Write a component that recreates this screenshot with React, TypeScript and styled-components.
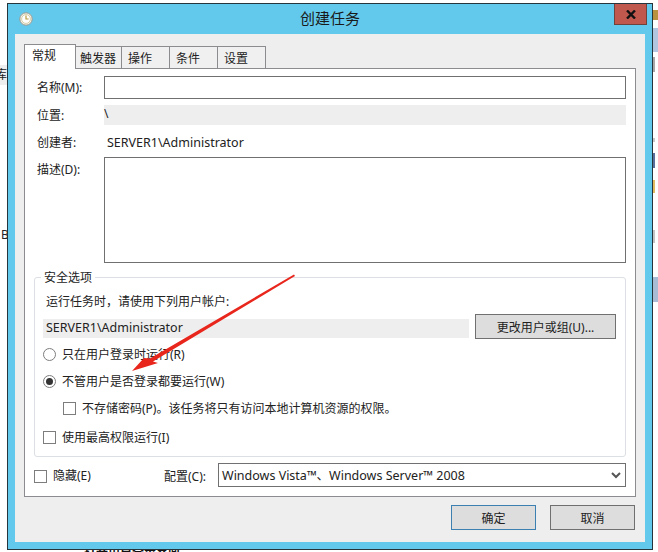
import React from "react";
import styled, { createGlobalStyle } from "styled-components";

const GlobalStyle = createGlobalStyle`
  html, body {
    margin: 0;
    padding: 0;
    background: #fff;
  }
  * {
    box-sizing: border-box;
  }
`;

const App: React.FC = () => {
  return (
    <Page>
      <GlobalStyle />
      <LeftScrap $top={65}>库</LeftScrap>
      <LeftLetter>B</LeftLetter>
      <RightStrip $top={10} $height={10} $width={5} $color="#b9923f" />
      <RightStrip $top={28} $height={24} $width={5} $color="#b3c6e0" />
      <RightStrip $top={57} $height={15} $width={2} $color="#a8a8a8" />
      <RightStrip $top={138} $height={4} $width={2} $color="#c9c9c9" />
      <RightStrip $top={153} $height={15} $width={2} $color="#5a6e9c" />
      <RightStrip $top={180} $height={13} $width={2} $color="#e0bb62" />
      <RightStrip $top={230} $height={13} $width={2} $color="#c4c4c4" />
      <RightStrip $top={277} $height={25} $width={5} $color="#a9bcd6" />
      <BottomScrap>打开用户登录界面</BottomScrap>

      <Window>
        <TitleBar>
          <ClockIcon viewBox="0 0 14 14">
            <circle cx="7" cy="7" r="6.2" fill="#f4f1e6" stroke="#9a9a90" />
            <circle cx="7" cy="7" r="4.4" fill="#fff" stroke="#d8cfa8" />
            <path d="M7 3.6V7H9.6" fill="none" stroke="#b99a3a" strokeWidth="1.2" />
          </ClockIcon>
          <Title>创建任务</Title>
          <CloseButton type="button" aria-label="关闭">
            <svg width="10" height="9" viewBox="0 0 10 9">
              <path d="M1 0.5L9 8.5M9 0.5L1 8.5" stroke="#111" strokeWidth="2.4" />
            </svg>
          </CloseButton>
        </TitleBar>

        <Client>
          <TabStrip>
            <Tab $active $width={52} $pad={7}>
              常规
            </Tab>
            <Tab $width={46} $pad={4}>
              触发器
            </Tab>
            <Tab $width={48} $pad={6}>
              操作
            </Tab>
            <Tab $width={48} $pad={6}>
              条件
            </Tab>
            <Tab $width={48} $pad={6}>
              设置
            </Tab>
          </TabStrip>

          <Pane>
            <FormRow $top={7}>
              <FieldLabel $drop={4}>名称(M):</FieldLabel>
              <TextInput $height={23} />
            </FormRow>
            <FormRow $top={6}>
              <FieldLabel $drop={3}>位置:</FieldLabel>
              <ReadOnlyField $height={20}>\</ReadOnlyField>
            </FormRow>
            <FormRow $top={7}>
              <FieldLabel $drop={3}>创建者:</FieldLabel>
              <PlainValue>SERVER1\Administrator</PlainValue>
            </FormRow>
            <FormRow $top={4}>
              <FieldLabel $drop={5}>描述(D):</FieldLabel>
              <TextInput $height={106} />
            </FormRow>

            <SecurityGroup>
              <Legend>安全选项</Legend>
              <Caption>运行任务时，请使用下列用户帐户:</Caption>
              <AccountRow>
                <AccountField>SERVER1\Administrator</AccountField>
                <DialogButton type="button" $width={141}>
                  更改用户或组(U)...
                </DialogButton>
              </AccountRow>
              <OptionRow $top={8}>
                <Radio />
                只在用户登录时运行(R)
              </OptionRow>
              <OptionRow $top={11}>
                <Radio $checked />
                不管用户是否登录都要运行(W)
              </OptionRow>
              <OptionRow $top={11} $indent={20}>
                <CheckBox />
                不存储密码(P)。该任务将只有访问本地计算机资源的权限。
              </OptionRow>
              <OptionRow $top={13}>
                <CheckBox />
                使用最高权限运行(I)
              </OptionRow>
            </SecurityGroup>

            <FooterRow>
              <HiddenOption>
                <CheckBox />
                隐藏(E)
              </HiddenOption>
              <ConfigLabel>配置(C):</ConfigLabel>
              <SelectBox>
                Windows Vista™、Windows Server™ 2008
                <svg width="10" height="7" viewBox="0 0 10 7">
                  <path d="M1 1L5 5L9 1" fill="none" stroke="#555" strokeWidth="2" />
                </svg>
              </SelectBox>
            </FooterRow>
          </Pane>

          <ButtonBar>
            <DialogButton type="button" $width={85} $primary>
              确定
            </DialogButton>
            <DialogButton type="button" $width={85}>
              取消
            </DialogButton>
          </ButtonBar>
        </Client>
      </Window>

      <ArrowOverlay viewBox="0 0 658 552">
        <polygon
          points="132,371 144,358 150,358.5 294,274.5 295,276 153,361.5 158,363"
          fill="#e8261c"
        />
      </ArrowOverlay>
    </Page>
  );
};

export default App;

const uiFont = `"Noto Sans", "Noto Sans CJK SC", sans-serif`;

const Page = styled.div`
  position: relative;
  width: 658px;
  height: 552px;
  padding: 3px 0 0 7px;
  overflow: hidden;
  background: #fff;
  color: #222;
  font-family: ${uiFont};
  font-size: 12px;
  line-height: 16px;
`;

const LeftScrap = styled.div<{ $top: number }>`
  position: absolute;
  left: 0;
  top: ${(p) => p.$top}px;
  width: 7px;
  height: 20px;
  overflow: hidden;
  background: #eeeeee;
  line-height: 20px;
  text-indent: -5px;
`;

const LeftLetter = styled.div`
  position: absolute;
  left: 1px;
  top: 227px;
  width: 6px;
  overflow: hidden;
`;

const RightStrip = styled.div<{
  $top: number;
  $height: number;
  $width: number;
  $color: string;
}>`
  position: absolute;
  left: 653px;
  top: ${(p) => p.$top}px;
  width: ${(p) => p.$width}px;
  height: ${(p) => p.$height}px;
  background: ${(p) => p.$color};
`;

const BottomScrap = styled.div`
  position: absolute;
  left: 84px;
  top: 544px;
  font-weight: 700;
  color: #111;
`;

const Window = styled.div`
  position: relative;
  display: flex;
  flex-direction: column;
  width: 646px;
  height: 547px;
  border: 1px solid #26343b;
  background: #63c9ec;
`;

const TitleBar = styled.div`
  position: relative;
  display: flex;
  flex: none;
  align-items: center;
  justify-content: center;
  height: 30px;
`;

const ClockIcon = styled.svg`
  position: absolute;
  left: 11px;
  top: 8px;
  width: 14px;
  height: 14px;
`;

const Title = styled.div`
  padding-bottom: 2px;
  font-size: 15px;
  line-height: 28px;
  color: #1a1a1a;
`;

const CloseButton = styled.button`
  position: absolute;
  right: 5px;
  top: 0;
  display: flex;
  align-items: center;
  justify-content: center;
  width: 33px;
  height: 21px;
  padding: 0;
  border: 1px solid #70423c;
  border-top: 0;
  background: #c0584e;
`;

const Client = styled.div`
  display: flex;
  flex: 1;
  flex-direction: column;
  margin: 0 7px 7px;
  padding: 10px 9px 0;
  background: #eeeeee;
`;

const TabStrip = styled.div`
  position: relative;
  z-index: 1;
  display: flex;
  flex: none;
  align-items: flex-start;
  height: 24px;
`;

const Tab = styled.div<{ $active?: boolean; $width: number; $pad: number }>`
  flex: none;
  width: ${(p) => p.$width}px;
  height: ${(p) => (p.$active ? 25 : 23)}px;
  margin-top: ${(p) => (p.$active ? 0 : 2)}px;
  padding-top: ${(p) => (p.$active ? 3 : 4)}px;
  padding-left: ${(p) => p.$pad}px;
  border: 1px solid #8c8c90;
  border-left-width: ${(p) => (p.$active ? 1 : 0)}px;
  border-bottom-width: ${(p) => (p.$active ? 0 : 1)}px;
  background: ${(p) => (p.$active ? "#fff" : "#f0f0f0")};
`;

const Pane = styled.div`
  flex: none;
  height: 429px;
  padding: 0 9px;
  border: 1px solid #8c8c90;
  background: #fff;
`;

const FormRow = styled.div<{ $top: number }>`
  display: grid;
  grid-template-columns: 70px 1fr;
  align-items: start;
  margin-top: ${(p) => p.$top}px;
`;

const FieldLabel = styled.div<{ $drop: number }>`
  padding-left: 3px;
  padding-top: ${(p) => p.$drop}px;
`;

const TextInput = styled.div<{ $height: number }>`
  height: ${(p) => p.$height}px;
  border: 1px solid #707070;
  background: #fff;
`;

const ReadOnlyField = styled.div<{ $height: number }>`
  height: ${(p) => p.$height}px;
  background: #eeeeee;
  line-height: 18px;
`;

const PlainValue = styled.div`
  padding: 3px 0 2px 3px;
  font-size: 12.5px;
  line-height: 16px;
`;

const SecurityGroup = styled.div`
  position: relative;
  height: 180px;
  margin-top: 14px;
  padding: 16px 8px 0;
  border: 1px solid #dcdfe3;
  border-radius: 3px;
`;

const Legend = styled.div`
  position: absolute;
  left: 6px;
  top: -8px;
  padding: 0 3px;
  background: #fff;
`;

const Caption = styled.div`
  padding-left: 3px;
`;

const AccountRow = styled.div`
  display: flex;
  align-items: flex-end;
  gap: 6px;
  margin-top: 4px;
`;

const AccountField = styled.div`
  width: 426px;
  height: 19px;
  margin-bottom: 1px;
  padding-left: 3px;
  background: #eeeeee;
  font-size: 12.5px;
  line-height: 18px;
`;

const DialogButton = styled.button<{ $width: number; $primary?: boolean }>`
  flex: none;
  width: ${(p) => p.$width}px;
  height: 25px;
  padding: 0;
  border: 1px solid ${(p) => (p.$primary ? "#3c7fb1" : "#707070")};
  background: #dddddd;
  color: #222;
  font-family: ${uiFont};
  font-size: 12px;
`;

const OptionRow = styled.div<{ $top: number; $indent?: number }>`
  display: flex;
  align-items: center;
  gap: 6px;
  height: 16px;
  margin-top: ${(p) => p.$top}px;
  margin-left: ${(p) => p.$indent ?? 0}px;

  & > span {
    margin-bottom: 2px;
  }
`;

const Radio = styled.span<{ $checked?: boolean }>`
  display: flex;
  flex: none;
  align-items: center;
  justify-content: center;
  width: 13px;
  height: 13px;
  border: 1px solid #7d7d7d;
  border-radius: 50%;

  &::after {
    content: "";
    display: ${(p) => (p.$checked ? "block" : "none")};
    width: 7px;
    height: 7px;
    border-radius: 50%;
    background: #333;
  }
`;

const CheckBox = styled.span`
  flex: none;
  width: 13px;
  height: 13px;
  border: 1px solid #7d7d7d;
  background: #fff;
`;

const FooterRow = styled.div`
  display: flex;
  align-items: center;
  margin-top: 6px;
  line-height: 18px;
`;

const HiddenOption = styled.div`
  display: flex;
  flex: none;
  align-items: center;
  gap: 6px;
  width: 130px;
  padding-top: 2px;
`;

const ConfigLabel = styled.div`
  flex: none;
  width: 54px;
  padding-top: 3px;
`;

const SelectBox = styled.div`
  display: flex;
  flex: none;
  align-items: center;
  justify-content: space-between;
  width: 408px;
  height: 24px;
  padding: 1px 4px 0 3px;
  border: 1px solid #707070;
  font-size: 12.5px;
`;

const ButtonBar = styled.div`
  display: flex;
  flex: none;
  justify-content: flex-end;
  gap: 14px;
  margin-top: 8px;
  margin-right: 1px;
`;

const ArrowOverlay = styled.svg`
  position: absolute;
  left: 0;
  top: 0;
  width: 658px;
  height: 552px;
  pointer-events: none;
`;
